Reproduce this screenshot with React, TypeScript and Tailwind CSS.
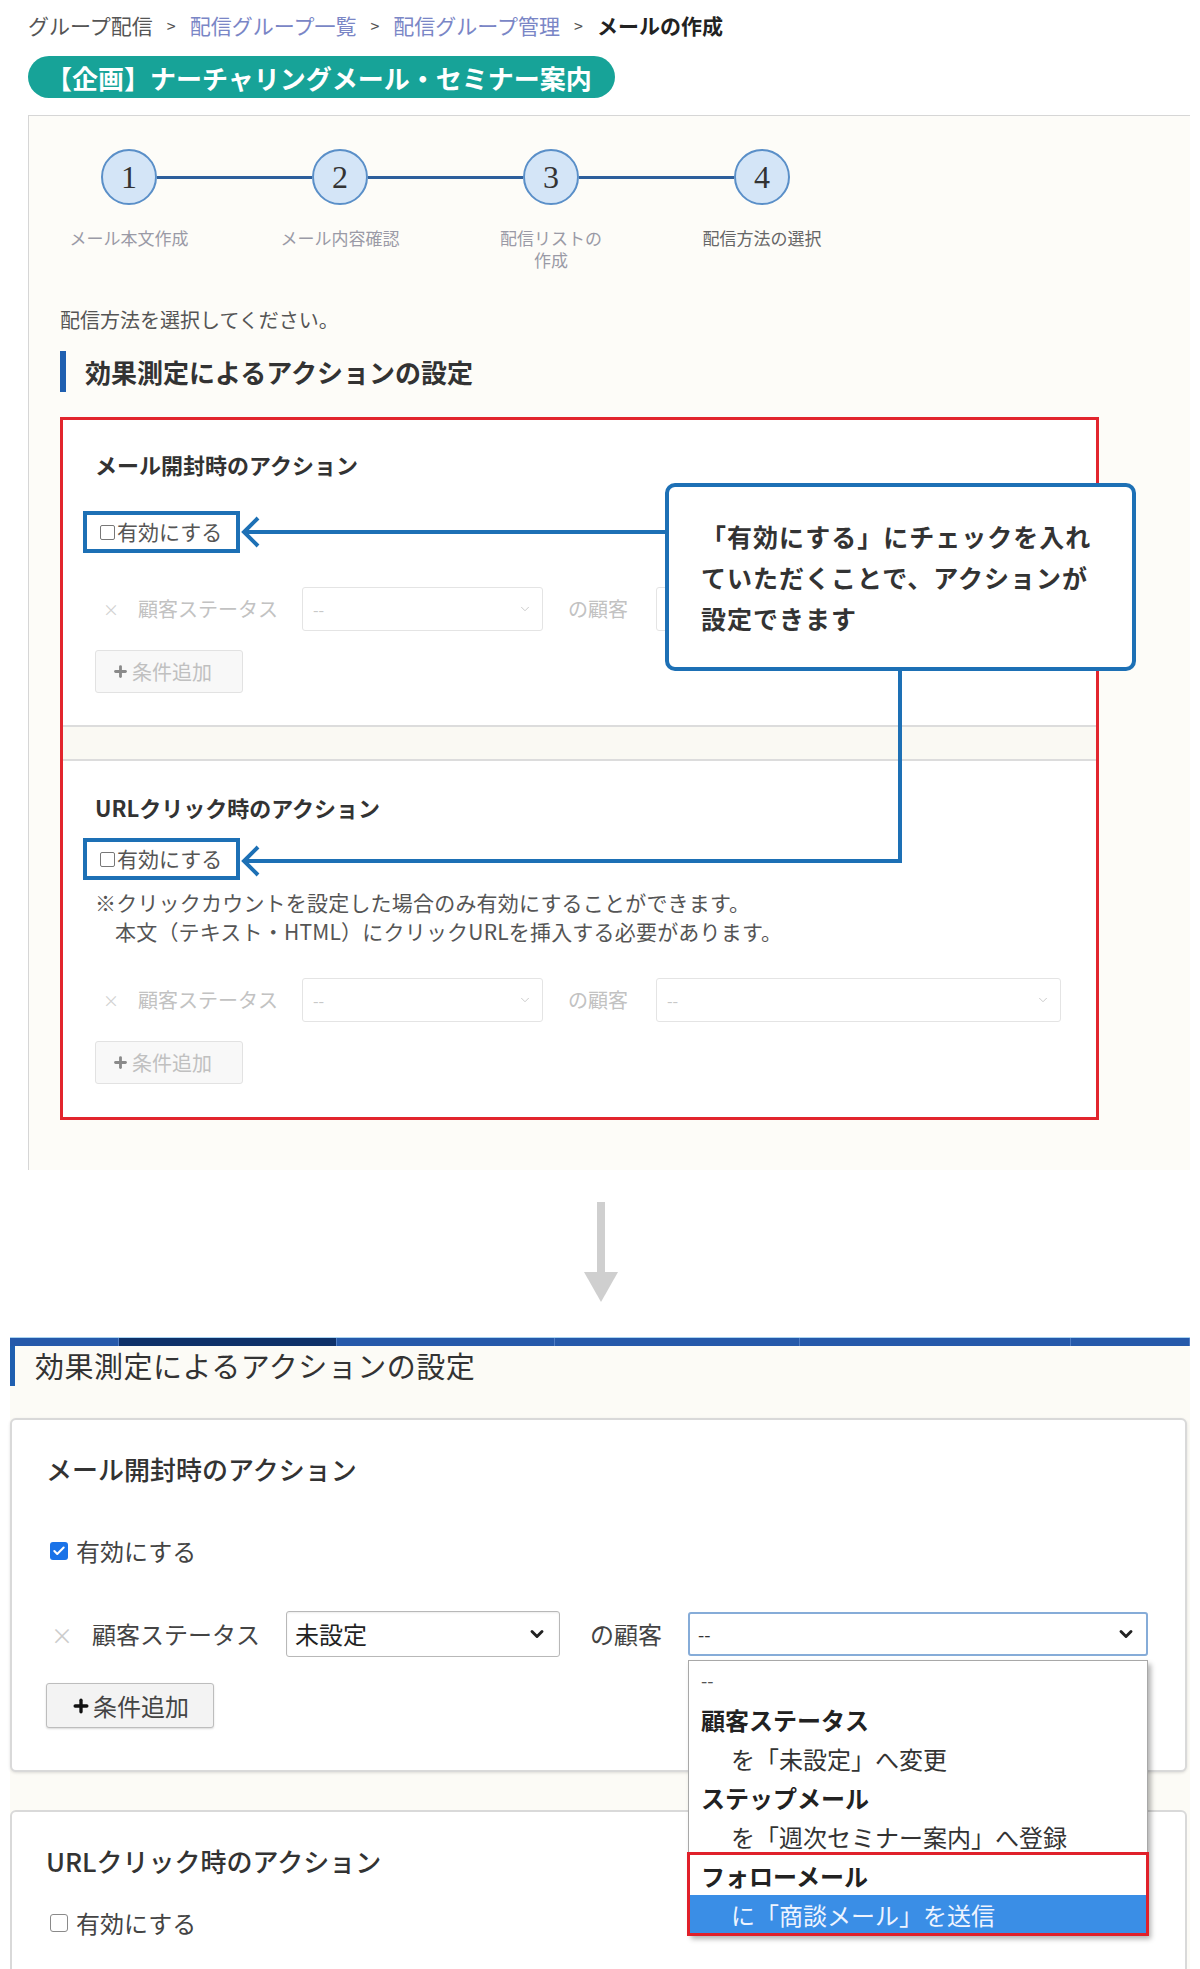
import { Check, ChevronDown, Plus } from "lucide-react";

const FadedSelect = ({ className }: { className: string }) => (
  <div
    className={`flex h-[44px] items-center justify-between rounded-[3px] border border-[#e4e4e4] bg-white pl-[10px] pr-[10px] text-[16px] text-[#c8c8c8] ${className}`}
  >
    <span>--</span>
    <ChevronDown className="h-[14px] w-[14px] text-[#c4c4c4]" strokeWidth={1.5} />
  </div>
);

const FadedRow = () => (
  <div className="flex items-center text-[20px] text-[#c2c2c2]">
    <span className="ml-[8px] text-[16px] text-[#d2d2d2]">×</span>
    <span className="ml-[19px]">顧客ステータス</span>
    <FadedSelect className="ml-[24px] w-[241px]" />
    <span className="ml-[25px]">の顧客</span>
    <FadedSelect className="ml-[28px] w-[405px]" />
  </div>
);

const FadedButton = () => (
  <div className="flex h-[43px] w-[148px] items-center rounded-[3px] border border-[#e2e2e2] bg-[#f8f8f8] pl-[16px] text-[20px] text-[#c0c0c0]">
    <Plus className="h-[17px] w-[17px] text-[#8a8a8a]" strokeWidth={4} />
    <span className="ml-[3px]">条件追加</span>
  </div>
);

// 注釈の青枠つきチェックボックス
const MarkedCheck = () => (
  <div className="-ml-[12px] flex h-[42px] w-fit items-center border-4 border-[#1d70b5] pl-[13px] pr-[14px] text-[21px] text-[#555]">
    <span className="h-[15px] w-[15px] rounded-[2px] border border-[#777] bg-white" />
    <span className="ml-[2px]">有効にする</span>
  </div>
);

const Circle = ({ n }: { n: number }) => (
  <div className="flex h-[56px] w-[56px] items-center justify-center rounded-full border-2 border-[#5a8fc8] bg-[#d4e5f7] font-['Liberation_Serif',serif] text-[32px] text-[#333]">
    {n}
  </div>
);

const Line = () => <div className="h-[3px] w-[155px] bg-[#2d5f9c]" />;

const tabs = [
  { w: "w-[109px]", c: "bg-[#2559aa]" },
  { w: "w-[218px]", c: "bg-[#0e3169]" },
  { w: "w-[218px]", c: "bg-[#2559aa]" },
  { w: "w-[245px]", c: "bg-[#2559aa]" },
  { w: "w-[271px]", c: "bg-[#2559aa]" },
  { w: "w-[119px]", c: "bg-[#2559aa]" },
];

const options = [
  { t: "--", cls: "pl-[12px] text-[18px] text-[#555]" },
  { t: "顧客ステータス", cls: "pl-[12px] font-bold text-[#222]" },
  { t: "を「未設定」へ変更", cls: "pl-[42px] text-[#333]" },
  { t: "ステップメール", cls: "pl-[12px] font-bold text-[#222]" },
  { t: "を「週次セミナー案内」へ登録", cls: "pl-[42px] text-[#333]" },
];

export default function App() {
  return (
    <div className="h-[1969px] w-[1200px] overflow-hidden bg-white font-['Noto_Sans_CJK_JP','Noto_Sans',sans-serif] text-[#333]">
      {/* パンくず */}
      <div className="ml-[28px] flex items-center pt-[11px] text-[21px] leading-[28px] text-[#555]">
        <span>グループ配信</span>
        <span className="mx-[14px] text-[16px]">&gt;</span>
        <span className="text-[#7a86c6]">配信グループ一覧</span>
        <span className="mx-[14px] text-[16px]">&gt;</span>
        <span className="text-[#7a86c6]">配信グループ管理</span>
        <span className="mx-[14px] text-[16px]">&gt;</span>
        <span className="font-bold text-[#222]">メールの作成</span>
      </div>

      <div className="ml-[28px] mt-[17px] flex h-[42px] w-fit items-center rounded-full bg-[#17a398] pl-[18px] pr-[23px] text-[26px] font-bold text-white">
        【企画】ナーチャリングメール・セミナー案内
      </div>

      {/* 上：設定前 */}
      <div className="ml-[28px] mt-[17px] w-[1162px] border-l border-t border-[#d6d6d6] bg-[#fdfcf8] pb-[50px] pt-[33px]">
        <div className="flex items-center pl-[72px]">
          <Circle n={1} />
          <Line />
          <Circle n={2} />
          <Line />
          <Circle n={3} />
          <Line />
          <Circle n={4} />
        </div>
        <div className="mt-[22px] flex gap-[11px] text-[17px] leading-[22px]">
          <div className="w-[200px] text-center text-[#9a9aa6]">メール本文作成</div>
          <div className="w-[200px] text-center text-[#9a9aa6]">メール内容確認</div>
          <div className="w-[200px] text-center text-[#9a9aa6]">
            配信リストの
            <br />
            作成
          </div>
          <div className="w-[200px] text-center text-[#666]">配信方法の選択</div>
        </div>

        <div className="pl-[31px]">
          <div className="mt-[35px] text-[20px] leading-[28px] text-[#555]">配信方法を選択してください。</div>
          <div className="mt-[17px] flex h-[41px] items-center border-l-[6px] border-[#1f5fb0] pl-[19px] text-[26px] font-bold text-[#333]">
            効果測定によるアクションの設定
          </div>

          <div className="relative mt-[25px] w-[1039px] border-[3px] border-[#e2252d]">
            <div className="border-b-2 border-[#dcdcdc] bg-white pb-[32px] pl-[32px] pt-[29px]">
              <div className="text-[22px] font-bold leading-[30px] text-[#333]">メール開封時のアクション</div>
              <div className="mt-[32px]">
                <MarkedCheck />
              </div>
              <div className="mt-[34px]">
                <FadedRow />
              </div>
              <div className="mt-[19px]">
                <FadedButton />
              </div>
            </div>
            <div className="h-[34px] border-b-2 border-[#dcdcdc] bg-[#faf9f3]" />
            <div className="bg-white pb-[33px] pl-[32px] pt-[31px]">
              <div className="text-[22px] font-bold leading-[30px] text-[#333]">URLクリック時のアクション</div>
              <div className="mt-[16px]">
                <MarkedCheck />
              </div>
              <div className="mt-[8px] text-[21px] leading-[29px] tracking-[0.2px] text-[#555]">
                <div>※クリックカウントを設定した場合のみ有効にすることができます。</div>
                <div className="pl-[20px]">本文（テキスト・HTML）にクリックURLを挿入する必要があります。</div>
              </div>
              <div className="mt-[32px]">
                <FadedRow />
              </div>
              <div className="mt-[19px]">
                <FadedButton />
              </div>
            </div>

            {/* 注釈の矢印 */}
            <svg className="pointer-events-none absolute left-0 top-0 z-10 overflow-visible" width="1033" height="700">
              <g fill="none" stroke="#1d70b5" strokeWidth="4" strokeLinejoin="miter">
                <path d="M604 112 H182" />
                <path d="M195 98 L181 112 L195 126" />
                <path d="M837 250 V441 H182" />
                <path d="M195 427 L181 441 L195 455" />
              </g>
            </svg>

            <div className="absolute left-[602px] top-[63px] z-20 h-[188px] w-[471px] whitespace-nowrap rounded-[10px] border-4 border-[#1d70b5] bg-white pl-[32px] pt-[29px] text-[25px] font-bold leading-[41px] tracking-[1px] text-[#333]">
              「有効にする」にチェックを入れ
              <br />
              ていただくことで、アクションが
              <br />
              設定できます
            </div>
          </div>
        </div>
      </div>

      {/* 下向き矢印 */}
      <svg className="ml-[575px] mt-[32px] block" width="52" height="100">
        <rect x="22" y="0" width="8" height="76" fill="#cfcfcf" />
        <polygon points="9,70 43,70 26,100" fill="#cfcfcf" />
      </svg>

      {/* 下：設定後 */}
      <div className="ml-[10px] mt-[35px] w-[1180px] bg-[#fcfbf6]">
        <div className="flex h-[9px] border-t border-[#a9d4f2]">
          {tabs.map((t, i) => (
            <div key={i} className={`${t.w} ${t.c} border-r border-[#4f7dc4]`} />
          ))}
        </div>
        <div className="flex h-[40px] items-center border-l-[5px] border-[#1f5fb0] pl-[20px] text-[29px] tracking-[0.5px] text-[#333]">
          効果測定によるアクションの設定
        </div>

        <div className="mt-[32px] w-[1177px] rounded-[6px] border-2 border-[#d9d9d9] bg-white pb-[42px] pl-[34px] pt-[31px] shadow-[0_1px_3px_rgba(0,0,0,0.12)]">
          <div className="text-[26px] font-medium leading-[36px] text-[#333]">メール開封時のアクション</div>
          <div className="ml-[4px] mt-[47px] flex h-[34px] items-center text-[24px] text-[#444]">
            <span className="flex h-[18px] w-[18px] items-center justify-center rounded-[3px] bg-[#1a73e8]">
              <Check className="h-[14px] w-[14px] text-white" strokeWidth={3.5} />
            </span>
            <span className="ml-[8px]">有効にする</span>
          </div>

          <div className="mt-[43px] flex items-center text-[24px] text-[#444]">
            <span className="ml-[5px] text-[22px] text-[#cccccc]">×</span>
            <span className="ml-[19px]">顧客ステータス</span>
            <div className="ml-[26px] flex h-[46px] w-[274px] items-center justify-between rounded-[3px] border border-[#b8b8b8] bg-white pl-[8px] pr-[12px] shadow-[inset_0_1px_2px_rgba(0,0,0,0.08)]">
              <span className="text-[#222]">未設定</span>
              <ChevronDown className="h-[20px] w-[20px] text-[#222]" strokeWidth={3.5} />
            </div>
            <span className="ml-[30px]">の顧客</span>
            <div className="relative ml-[26px]">
              <div className="flex h-[44px] w-[460px] items-center justify-between rounded-[3px] border-2 border-[#86acd8] bg-white pl-[8px] pr-[10px]">
                <span className="text-[18px] text-[#333]">--</span>
                <ChevronDown className="h-[20px] w-[20px] text-[#222]" strokeWidth={3.5} />
              </div>
              <div className="absolute left-0 top-[48px] z-30 w-[460px] border border-[#a8a8a8] bg-white text-[24px] shadow-[3px_4px_5px_rgba(0,0,0,0.3)]">
                {options.map((o) => (
                  <div key={o.t} className={`h-[39px] leading-[39px] ${o.cls}`}>
                    {o.t}
                  </div>
                ))}
                <div className="relative">
                  <div className="h-[39px] pl-[12px] font-bold leading-[39px] text-[#222]">フォローメール</div>
                  <div className="h-[39px] bg-[#3a8ee6] pl-[42px] leading-[39px] text-[#eef4ff]">に「商談メール」を送信</div>
                  <div className="pointer-events-none absolute -bottom-[2px] -left-[2px] -right-[2px] -top-[4px] border-[3px] border-[#e0202a]" />
                </div>
              </div>
            </div>
          </div>

          <div className="mt-[26px] flex h-[45px] w-[168px] items-center justify-center rounded-[3px] border border-[#bdbdbd] bg-[#f3f3f3] text-[24px] text-[#444] shadow-[0_1px_2px_rgba(0,0,0,0.15)]">
            <Plus className="h-[20px] w-[20px] text-[#111]" strokeWidth={4} />
            <span className="ml-[2px]">条件追加</span>
          </div>
        </div>

        <div className="mt-[38px] h-[240px] w-[1177px] rounded-[6px] border-2 border-[#d9d9d9] bg-white pl-[34px] pt-[31px]">
          <div className="text-[26px] font-medium leading-[36px] text-[#333]">URLクリック時のアクション</div>
          <div className="ml-[4px] mt-[27px] flex h-[34px] items-center text-[24px] text-[#444]">
            <span className="h-[18px] w-[18px] rounded-[3px] border border-[#8a8a8a] bg-white" />
            <span className="ml-[8px]">有効にする</span>
          </div>
        </div>
      </div>
    </div>
  );
}
